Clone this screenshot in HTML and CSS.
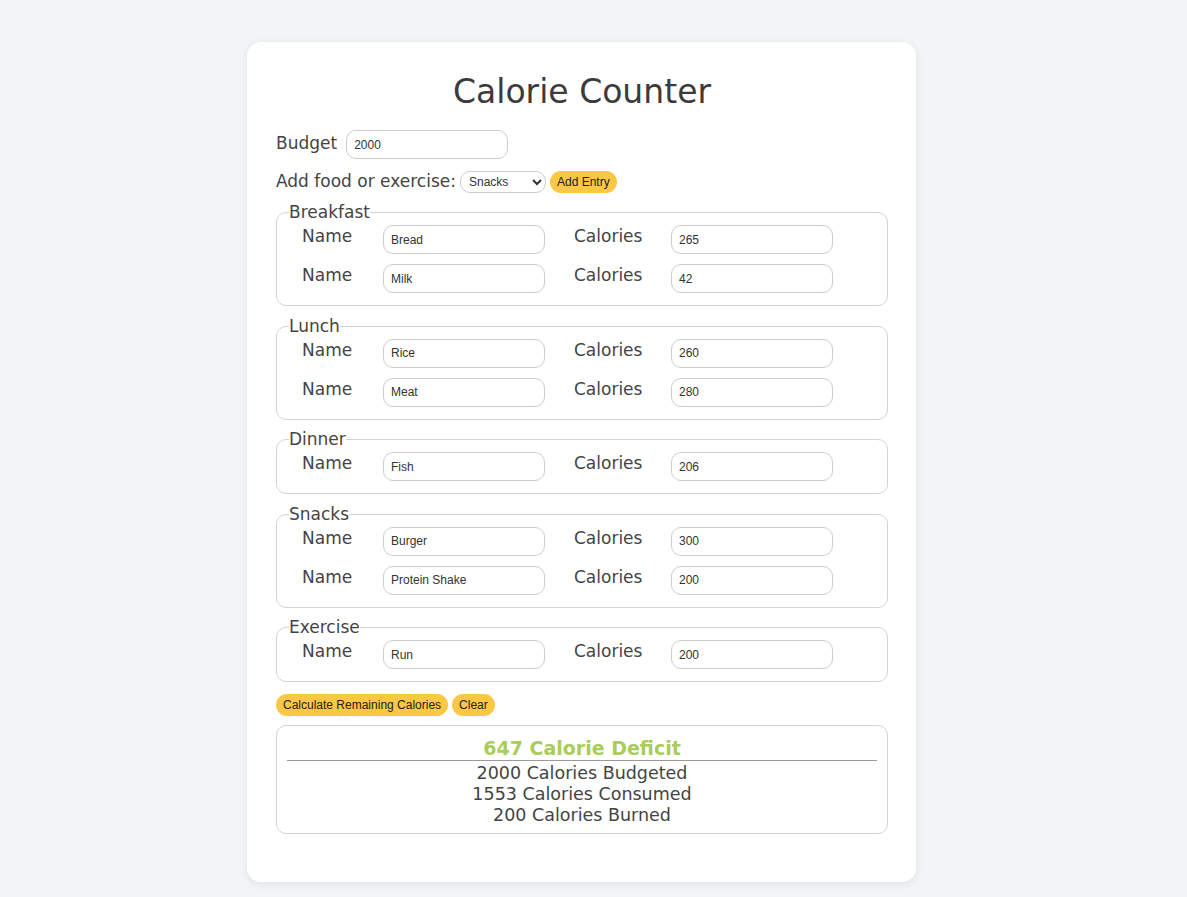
FILE: index.html
```html
<!DOCTYPE html>
<html lang="en">
<head>
  <meta charset="UTF-8">
  <meta name="viewport" content="width=device-width, initial-scale=1.0">
  <title>Calorie Counter</title>
  <link rel="stylesheet" href="styles.css">
</head>
<body>
  <main class="card">
    <h1 class="title">Calorie Counter</h1>

    <form id="calorieForm">
      <div class="budget-row">
        <label for="budget">Budget</label>
        <input type="number" id="budget" class="field" value="2000">
      </div>

      <div class="add-row">
        <label for="entryDropdown">Add food or exercise:</label>
        <select id="entryDropdown" class="picker">
          <option value="breakfast">Breakfast</option>
          <option value="lunch">Lunch</option>
          <option value="dinner">Dinner</option>
          <option value="snacks" selected>Snacks</option>
          <option value="exercise">Exercise</option>
        </select>
        <button type="button" class="btn">Add Entry</button>
      </div>

      <fieldset class="meal">
        <legend>Breakfast</legend>
        <div class="entries">
          <label>Name</label><input type="text" class="field" value="Bread">
          <label>Calories</label><input type="number" class="field" value="265">
          <label>Name</label><input type="text" class="field" value="Milk">
          <label>Calories</label><input type="number" class="field" value="42">
        </div>
      </fieldset>

      <fieldset class="meal">
        <legend>Lunch</legend>
        <div class="entries">
          <label>Name</label><input type="text" class="field" value="Rice">
          <label>Calories</label><input type="number" class="field" value="260">
          <label>Name</label><input type="text" class="field" value="Meat">
          <label>Calories</label><input type="number" class="field" value="280">
        </div>
      </fieldset>

      <fieldset class="meal">
        <legend>Dinner</legend>
        <div class="entries">
          <label>Name</label><input type="text" class="field" value="Fish">
          <label>Calories</label><input type="number" class="field" value="206">
        </div>
      </fieldset>

      <fieldset class="meal">
        <legend>Snacks</legend>
        <div class="entries">
          <label>Name</label><input type="text" class="field" value="Burger">
          <label>Calories</label><input type="number" class="field" value="300">
          <label>Name</label><input type="text" class="field" value="Protein Shake">
          <label>Calories</label><input type="number" class="field" value="200">
        </div>
      </fieldset>

      <fieldset class="meal">
        <legend>Exercise</legend>
        <div class="entries">
          <label>Name</label><input type="text" class="field" value="Run">
          <label>Calories</label><input type="number" class="field" value="200">
        </div>
      </fieldset>

      <div class="controls">
        <button type="submit" class="btn">Calculate Remaining Calories</button>
        <button type="button" class="btn">Clear</button>
      </div>
    </form>

    <div class="output">
      <span class="deficit">647 Calorie Deficit</span>
      <hr>
      <p>2000 Calories Budgeted</p>
      <p>1553 Calories Consumed</p>
      <p>200 Calories Burned</p>
    </div>
  </main>
</body>
</html>
```

FILE: styles.css
```css
* {
  box-sizing: border-box;
}

body {
  margin: 0;
  padding: 42px 24px 15px 0;
  background-color: #f3f4f6;
  font-family: "DejaVu Sans", "Open Sans", sans-serif;
  font-size: 17px;
  color: #444;
}

.card {
  width: 669px;
  margin: 0 auto;
  background-color: #fff;
  border-radius: 14px;
  box-shadow: 0 2px 8px rgba(0, 0, 0, 0.08);
  padding: 29px 28px 48px 29px;
}

.title {
  margin: 0 0 19px;
  font-size: 33px;
  line-height: 41px;
  font-weight: 400;
  text-align: center;
  color: #3b3b3b;
}

.field {
  width: 162px;
  height: 29px;
  padding: 0 7px;
  border: 1px solid #ccc;
  border-radius: 10px;
  font-family: Arial, sans-serif;
  font-size: 12px;
  color: #333;
  background-color: #fff;
}

.budget-row {
  display: flex;
  align-items: flex-start;
  gap: 9px;
  margin-top: -1px;
}

.budget-row label {
  line-height: 26px;
}

.add-row {
  display: flex;
  align-items: center;
  gap: 4px;
  margin-top: 10px;
  line-height: 25px;
}

.picker {
  width: 86px;
  height: 22px;
  padding: 0 4px;
  border: 1px solid #ccc;
  border-radius: 10px;
  font-family: Arial, sans-serif;
  font-size: 12px;
  color: #333;
  background-color: #fff;
}

.btn {
  height: 22px;
  padding: 0 7px;
  border: none;
  border-radius: 11px;
  background-color: #fbc744;
  font-family: Arial, sans-serif;
  font-size: 12px;
  color: #222;
  cursor: pointer;
}

.meal {
  margin: 6px 0 0;
  padding: 0 12px 12px;
  border: 1px solid #d4d4d4;
  border-radius: 10px;
  min-inline-size: 0;
}

.meal + .meal {
  margin-top: 7.5px;
}

.meal legend {
  padding: 0;
  line-height: 25px;
}

.entries {
  display: grid;
  grid-template-columns: 81px 191px 97px 162px;
  row-gap: 10px;
  padding-left: 13px;
  align-items: start;
}

.entries label {
  line-height: 22px;
}

.controls {
  display: flex;
  gap: 4px;
  margin-top: 12px;
}

.output {
  margin-top: 9px;
  padding: 10px 10px 7px;
  border: 1px solid #d4d4d4;
  border-radius: 10px;
  text-align: center;
}

.deficit {
  display: block;
  font-size: 19px;
  line-height: 24px;
  font-weight: 700;
  color: #a8cd5a;
}

.output hr {
  margin: 0 0 2px;
  border: 0;
  border-top: 1px solid #999;
}

.output p {
  margin: 0;
  font-size: 17.5px;
  line-height: 21px;
}
```
